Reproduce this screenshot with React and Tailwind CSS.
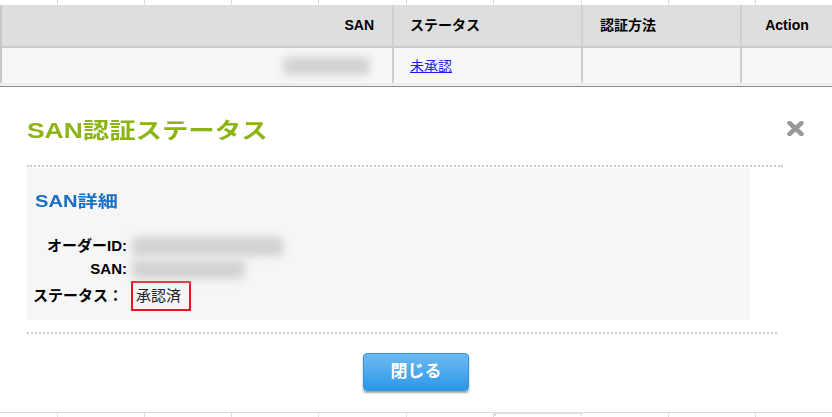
const cols = [58, 87, 87, 87, 88, 87, 88, 87, 87, 96];

const GridStrip = ({ height, selected, topLine }) => (
    <div className={`flex ${height} ${topLine ? "border-t border-[#dadada]" : ""}`}>
        {cols.map((w, i) => (
            <div
                key={i}
                style={{ width: w }}
                className={`shrink-0 h-full ${i < cols.length - 1 ? "border-r border-[#dddddd]" : ""} ${selected === i ? "border-t-2 border-x-2 border-[#217346] -mt-px" : ""}`}
            />
        ))}
    </div>
);

const Blur = ({ className }) => (
    <div className={`bg-[#d2d2d2] blur-[4px] rounded-sm ${className}`} />
);

export default function App() {
    return (
        <div className="w-[832px] h-[417px] overflow-hidden bg-white text-black font-['Liberation_Sans','Noto_Sans_CJK_JP',sans-serif]">
            {/* <!-- sheet gridlines above --> */}
            <GridStrip height="h-[5px]" />

            {/* <!-- table screenshot --> */}
            <div className="border-l-2 border-[#c8c8c8]">
                <div className="flex h-[43px] bg-[#dedede] text-[14px] font-bold border-b-2 border-[#cbcbcb]">
                    <div className="w-[390px] flex items-center justify-end pr-[18px]">SAN</div>
                    <div className="w-[189px] border-l-2 border-[#cfcfcf] flex items-center pl-[16px]">ステータス</div>
                    <div className="w-[159px] border-l-2 border-[#cfcfcf] flex items-center pl-[17px]">認証方法</div>
                    <div className="flex-1 border-l-2 border-[#cfcfcf] flex items-center justify-center">Action</div>
                </div>
                <div className="flex h-[35px] bg-[#f7f7f7] text-[14px]">
                    <div className="w-[390px] flex items-center justify-end pr-[22px]">
                        <Blur className="w-[87px] h-[18px]" />
                    </div>
                    <div className="w-[189px] border-l-2 border-[#cfcfcf] flex items-center pl-[16px]">
                        <a className="text-[#1a1aee] underline leading-none">未承認</a>
                    </div>
                    <div className="w-[159px] border-l-2 border-[#cfcfcf]" />
                    <div className="flex-1 border-l-2 border-[#cfcfcf]" />
                </div>
            </div>
            <div className="h-[3px] bg-[#eeeeee]" />

            {/* <!-- modal screenshot --> */}
            <div className="h-[326px] border-t border-[#8e8e8e] bg-white">
                <div className="flex items-center justify-between pl-[27px] pr-[28px] pt-[28px]">
                    <h1 className="inline-block origin-left scale-x-[1.2] text-[22px] leading-[32px] font-bold text-[#8cb414]">SAN認証ステータス</h1>
                    <svg width="17" height="15" viewBox="0 0 17 15" className="-mt-[6px]">
                        <path d="M2.5 2 L14.5 13 M14.5 2 L2.5 13" stroke="#999999" strokeWidth="4.5" strokeLinecap="round" />
                    </svg>
                </div>

                <div className="ml-[27px] w-[756px] mt-[18px] border-t-2 border-dotted border-[#cccccc]" />

                {/* <!-- details panel --> */}
                <div className="ml-[27px] w-[723px] mt-[1px] bg-[#f6f6f6] pt-[24px] pb-[9px]">
                    <h2 className="pl-[8px] text-[16px] leading-[20px] font-bold text-[#1b6ec2]">
                        <span className="inline-block origin-left scale-x-[1.26]">SAN詳細</span>
                    </h2>
                    <div className="mt-[22px] text-[15px]">
                        <div className="flex items-center h-[24px]">
                            <span className="w-[100px] text-right font-bold">オーダーID:</span>
                            <Blur className="ml-[5px] w-[151px] h-[19px]" />
                        </div>
                        <div className="flex items-center h-[22px]">
                            <span className="w-[100px] text-right font-bold">SAN:</span>
                            <Blur className="ml-[5px] w-[113px] h-[19px]" />
                        </div>
                        <div className="flex items-center h-[30px] mt-[1px]">
                            <span className="w-[104px] pl-[6px] font-bold whitespace-nowrap">ステータス：</span>
                            <div className="w-[60px] h-[30px] border-[2.5px] border-[#e6141c] flex items-center pl-[3px] text-[15px] text-[#222]">承認済</div>
                        </div>
                    </div>
                </div>

                <div className="ml-[27px] w-[750px] mt-[12px] border-t-2 border-dotted border-[#cccccc]" />

                <div className="flex justify-center mt-[19px]">
                    <button className="w-[106px] h-[38px] rounded-[4px] border border-[#3592d8] bg-linear-to-b from-[#6cb9f1] to-[#2598e8] text-white text-[17px] font-bold shadow-[0_2px_2px_rgba(0,0,0,0.35)]">
                        閉じる
                    </button>
                </div>
            </div>

            {/* <!-- sheet gridlines below --> */}
            <GridStrip height="h-[5px]" selected={6} topLine />
        </div>
    );
}
